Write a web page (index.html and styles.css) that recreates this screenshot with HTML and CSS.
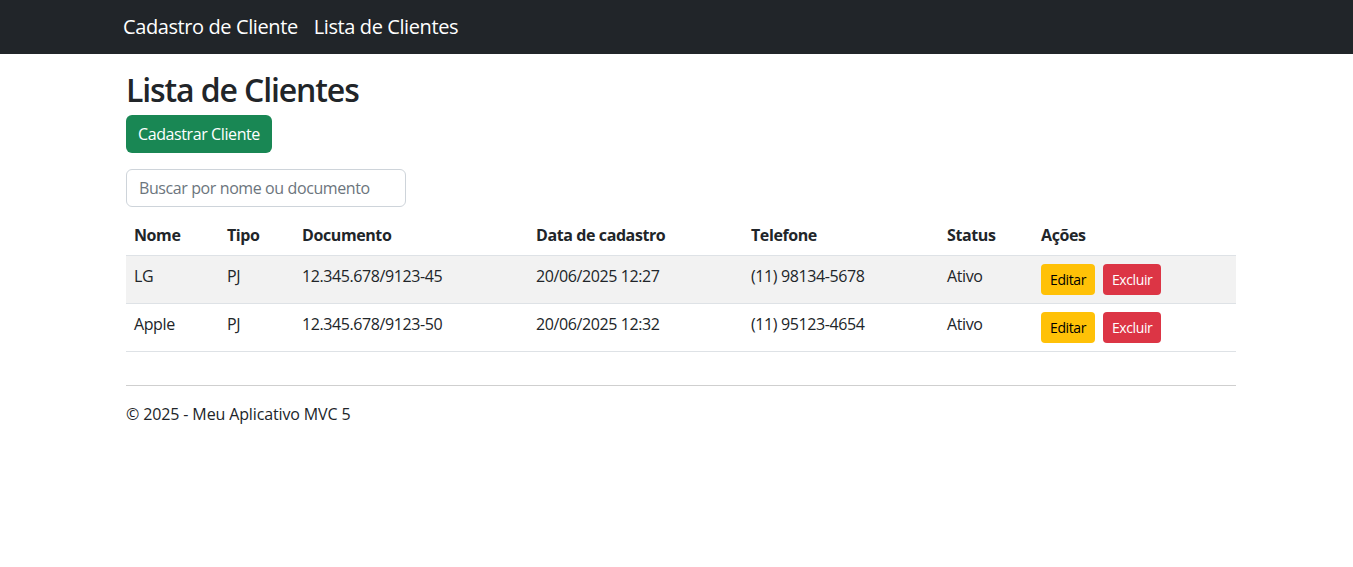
FILE: index.html
```html
<!DOCTYPE html>
<html lang="pt-BR">
<head>
<meta charset="utf-8">
<title>Lista de Clientes</title>
<link rel="stylesheet" href="styles.css">
</head>
<body>
<header class="navbar">
  <div class="nav-inner">
    <a class="brand" href="#">Cadastro de Cliente</a>
    <a class="nav-link" href="#">Lista de Clientes</a>
  </div>
</header>
<main class="container">
  <h1 class="title">Lista de Clientes</h1>
  <a class="btn btn-success" href="#">Cadastrar Cliente</a>
  <form class="search">
    <input class="form-control" type="text" placeholder="Buscar por nome ou documento">
  </form>
  <table class="table">
    <thead>
      <tr>
        <th class="c-nome">Nome</th>
        <th class="c-tipo">Tipo</th>
        <th class="c-doc">Documento</th>
        <th class="c-data">Data de cadastro</th>
        <th class="c-tel">Telefone</th>
        <th class="c-status">Status</th>
        <th class="c-acoes">Ações</th>
      </tr>
    </thead>
    <tbody>
      <tr class="striped">
        <td>LG</td>
        <td>PJ</td>
        <td>12.345.678/9123-45</td>
        <td>20/06/2025 12:27</td>
        <td>(11) 98134-5678</td>
        <td>Ativo</td>
        <td class="actions"><a class="btn btn-sm btn-warning" href="#">Editar</a><a class="btn btn-sm btn-danger" href="#">Excluir</a></td>
      </tr>
      <tr>
        <td>Apple</td>
        <td>PJ</td>
        <td>12.345.678/9123-50</td>
        <td>20/06/2025 12:32</td>
        <td>(11) 95123-4654</td>
        <td>Ativo</td>
        <td class="actions"><a class="btn btn-sm btn-warning" href="#">Editar</a><a class="btn btn-sm btn-danger" href="#">Excluir</a></td>
      </tr>
    </tbody>
  </table>
  <footer class="footer">
    <hr class="rule">
    <p class="copy">&copy; 2025 - Meu Aplicativo MVC 5</p>
  </footer>
</main>
</body>
</html>
```
FILE: styles.css
```css
* { box-sizing: border-box; }
html, body { margin: 0; padding: 0; }
body {
  font-family: "Open Sans", "Noto Sans", "Liberation Sans", sans-serif;
  font-size: 16px;
  line-height: 1.5;
  letter-spacing: -0.025em;
  color: #212529;
  background: #fff;
}
a { text-decoration: none; }

.navbar {
  background: #212529;
  height: 54px;
  display: flex;
  align-items: center;
}
.nav-inner {
  margin-left: 123px;
  display: flex;
  align-items: center;
  gap: 16px;
}
.brand, .nav-link {
  color: #fff;
  font-size: 20px;
  line-height: 30px;
}

.container {
  width: 1110px;
  margin-left: 126px;
  padding-top: 17px;
}
.title {
  margin: 0 0 6px;
  font-size: 32px;
  font-weight: 600;
  line-height: 38px;
  letter-spacing: -0.035em;
}
.btn {
  display: inline-block;
  border-radius: 6px;
  color: #fff;
  text-align: center;
  vertical-align: middle;
}
.btn-success {
  background: #198754;
  font-size: 16px;
  line-height: 24px;
  padding: 7px 12px;
  height: 38px;
}
.search { margin: 16px 0 8px; }
.form-control {
  display: block;
  width: 280px;
  height: 38px;
  padding: 6px 12px;
  font: inherit;
  letter-spacing: -0.025em;
  color: #212529;
  border: 1px solid #ced4da;
  border-radius: 6px;
}
.form-control::placeholder { color: #6c757d; }

.table {
  width: 100%;
  border-collapse: collapse;
  margin-bottom: 33px;
}
.table th, .table td {
  text-align: left;
  padding: 8px;
  border-bottom: 1px solid #dee2e6;
  vertical-align: top;
}
.table th { font-weight: 700; }
.striped td { background: #f2f2f2; }
.c-nome { width: 93px; }
.c-tipo { width: 75px; }
.c-doc { width: 234px; }
.c-data { width: 215px; }
.c-tel { width: 196px; }
.c-status { width: 94px; }

.actions { white-space: nowrap; }
.btn-sm {
  font-size: 14px;
  line-height: 21px;
  padding: 5px 9px;
  border-radius: 4px;
  height: 31px;
}
.btn-sm + .btn-sm { margin-left: 8px; }
.btn-warning { background: #ffc107; color: #000; }
.btn-danger { background: #dc3545; color: #fff; }

.rule {
  margin: 0;
  border: 0;
  border-top: 1px solid #cfcfcf;
}
.copy {
  margin: 16px 0 0;
  letter-spacing: -0.008em;
}
```
